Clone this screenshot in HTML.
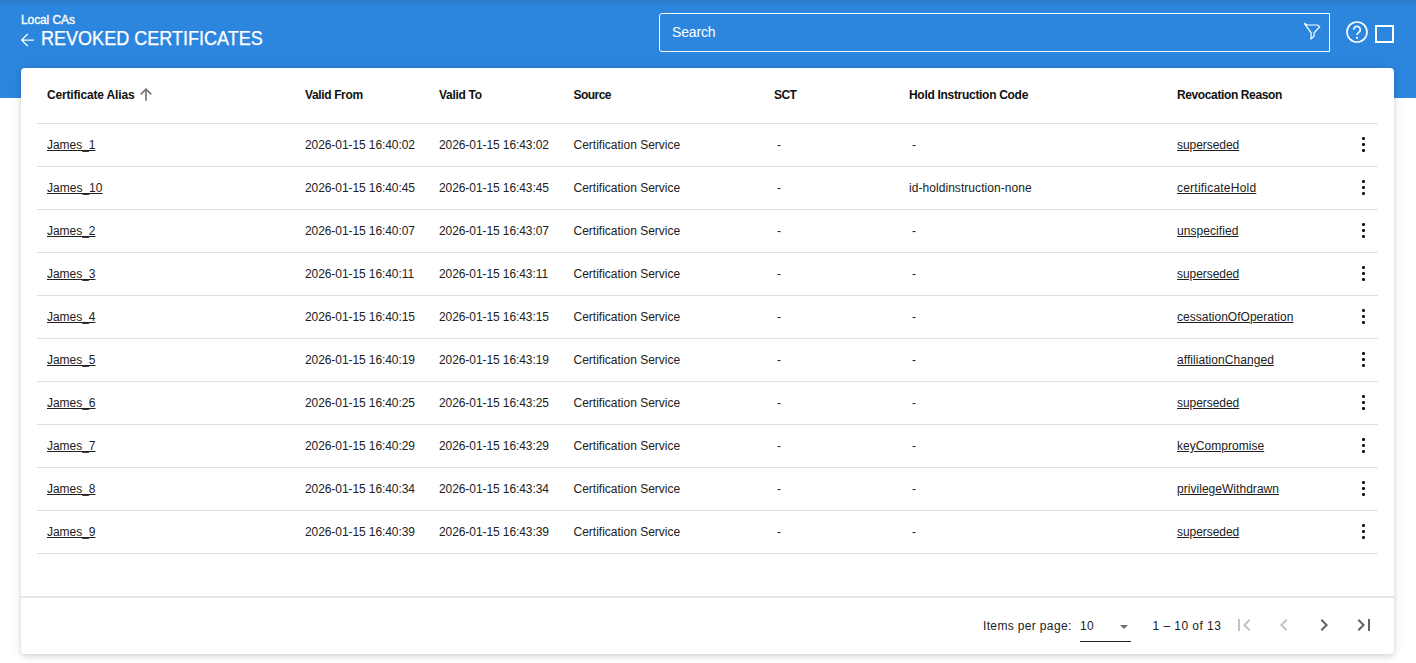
<!DOCTYPE html>
<html lang="en">
<head>
<meta charset="utf-8">
<title>Revoked Certificates</title>
<style>
*{box-sizing:border-box;margin:0;padding:0}
html,body{width:1416px;height:663px;overflow:hidden;background:#fff;font-family:"Liberation Sans",Arial,sans-serif;color:#212121}
.hdr{position:absolute;left:0;top:0;width:1416px;height:98px;background:linear-gradient(to bottom,#2a7aca 0,#2c81d6 3px,#2d86de 7px) #2d86de}
.crumb{position:absolute;left:21px;top:13px;font-size:12px;line-height:14px;color:#fff;-webkit-text-stroke:.35px #fff;letter-spacing:-.1px}
.back{position:absolute;left:20px;top:31.500px;width:16px;height:16px}
.title{position:absolute;left:41px;top:26px;font-size:19.5px;line-height:24px;color:#fff;white-space:nowrap;-webkit-text-stroke:.25px #fff;transform:scaleX(.925);transform-origin:0 0}
.search{position:absolute;left:659px;top:13px;width:671px;height:39px;border:1px solid #fff;border-radius:3px 0 0 3px}
.search span{position:absolute;left:12px;top:10px;font-size:14px;line-height:16px;color:#fff;letter-spacing:-.16px}
.filter{position:absolute;left:1300px;top:20px;width:24px;height:24px}
.help{position:absolute;left:1345.500px;top:21px;width:22px;height:22px}
.sq{position:absolute;left:1375px;top:25px;width:19px;height:18px;border:2px solid #fff}
.card{position:absolute;left:21px;top:68px;width:1373px;height:586px;background:#fff;border-radius:4px;box-shadow:0 2px 5px rgba(0,0,0,.12),0 1px 13px rgba(0,0,0,.09)}
.row{position:absolute;left:16px;width:1341px;height:43px;border-bottom:1px solid #e0e0e0}
.row.h{top:0;height:56px;font-weight:bold}
.c{position:absolute;top:0;height:42px;line-height:42px;font-size:12px;white-space:nowrap;color:#212121}
.h .c{height:55px;line-height:55px;color:#111}
.c a{color:#212121;text-decoration:underline}
.c1{left:10px}.c2{left:268px}.c3{left:402px}.c4{left:536.500px}.c5{left:740px}.c6{left:872px}.c6.d{left:875px}.c7{left:1140px}
.h .c5{left:737px}
.sort{position:absolute;left:102px;top:19px;width:14px;height:16px}
.dots{position:absolute;left:1324.800px;top:12.700px;width:4px;height:16px}
.dots i{position:absolute;left:0;width:3.400px;height:3.400px;border-radius:1.200px;background:#111}
.pg{position:absolute;left:0;top:528px;width:1373px;height:58px;border-top:2px solid #e4e4e4;font-size:12px;color:#212121}
.pg span{position:absolute;top:20px;line-height:16px;white-space:nowrap}
.pg .sel{position:absolute;left:1059px;top:43px;width:51px;height:1px;background:#212121}
.pg .tri{position:absolute;left:1098.600px;top:26.500px;width:0;height:0;border-left:4.400px solid transparent;border-right:4.400px solid transparent;border-top:4.400px solid #6e6e6e}
.pg svg{position:absolute;top:15px;width:24px;height:24px}
</style>
</head>
<body>
<div class="hdr">
  <div class="crumb">Local CAs</div>
  <svg class="back" viewBox="0 0 16 16"><path d="M14 8H1.800M7.700 2L1.700 8l6 6" fill="none" stroke="#fff" stroke-width="1.25"/></svg>
  <div class="title">REVOKED CERTIFICATES</div>
  <div class="search"><span>Search</span></div>
  <svg class="filter" viewBox="0 0 24 24"><path d="M4.300 3.400L7.200 5h10.200l2.300 1.800-5.600 6V16l-3 2.900v-6.100z" fill="none" stroke="#fff" stroke-width="1.200" stroke-linejoin="miter"/></svg>
  <svg class="help" viewBox="0 0 22 22"><circle cx="11" cy="11" r="10" fill="none" stroke="#fff" stroke-width="1.6"/><path d="M7.700 8.700a3.300 3.300 0 1 1 5.100 2.700c-1.100.800-1.800 1.300-1.800 2.700" fill="none" stroke="#fff" stroke-width="1.600"/><circle cx="11" cy="16.800" r="1.100" fill="#fff"/></svg>
  <div class="sq"></div>
</div>
<div class="card">
  <div class="row h">
    <div class="c c1" style="letter-spacing:-0.169px">Certificate Alias</div>
    <svg class="sort" viewBox="0 0 14 16"><path d="M7 13.700V2.200M1.800 7.400L7 2.200l5.200 5.200" fill="none" stroke="#757575" stroke-width="1.7"/></svg>
    <div class="c c2" style="letter-spacing:-0.366px">Valid From</div>
    <div class="c c3" style="letter-spacing:-0.291px">Valid To</div>
    <div class="c c4" style="letter-spacing:-0.531px">Source</div>
    <div class="c c5" style="letter-spacing:-0.6px">SCT</div>
    <div class="c c6" style="letter-spacing:-0.301px">Hold Instruction Code</div>
    <div class="c c7" style="letter-spacing:-0.381px">Revocation Reason</div>
  </div>
  <div class="row" style="top:56px">
    <div class="c c1" style="letter-spacing:-0.029px"><a>James_1</a></div>
    <div class="c c2" style="letter-spacing:-0.081px">2026-01-15 16:40:02</div>
    <div class="c c3" style="letter-spacing:-0.081px">2026-01-15 16:43:02</div>
    <div class="c c4">Certification Service</div>
    <div class="c c5">-</div>
    <div class="c c6 d">-</div>
    <div class="c c7" style="letter-spacing:-0.052px"><a>superseded</a></div>
    <div class="dots"><i style="top:0"></i><i style="top:6px"></i><i style="top:12px"></i></div>
  </div>
  <div class="row" style="top:99px">
    <div class="c c1" style="letter-spacing:0.016px"><a>James_10</a></div>
    <div class="c c2" style="letter-spacing:-0.081px">2026-01-15 16:40:45</div>
    <div class="c c3" style="letter-spacing:-0.081px">2026-01-15 16:43:45</div>
    <div class="c c4">Certification Service</div>
    <div class="c c5">-</div>
    <div class="c c6" style="letter-spacing:0.056px">id-holdinstruction-none</div>
    <div class="c c7" style="letter-spacing:0.218px"><a>certificateHold</a></div>
    <div class="dots"><i style="top:0"></i><i style="top:6px"></i><i style="top:12px"></i></div>
  </div>
  <div class="row" style="top:142px">
    <div class="c c1" style="letter-spacing:-0.029px"><a>James_2</a></div>
    <div class="c c2" style="letter-spacing:-0.081px">2026-01-15 16:40:07</div>
    <div class="c c3" style="letter-spacing:-0.081px">2026-01-15 16:43:07</div>
    <div class="c c4">Certification Service</div>
    <div class="c c5">-</div>
    <div class="c c6 d">-</div>
    <div class="c c7" style="letter-spacing:0.071px"><a>unspecified</a></div>
    <div class="dots"><i style="top:0"></i><i style="top:6px"></i><i style="top:12px"></i></div>
  </div>
  <div class="row" style="top:185px">
    <div class="c c1" style="letter-spacing:-0.029px"><a>James_3</a></div>
    <div class="c c2" style="letter-spacing:-0.081px">2026-01-15 16:40:11</div>
    <div class="c c3" style="letter-spacing:-0.081px">2026-01-15 16:43:11</div>
    <div class="c c4">Certification Service</div>
    <div class="c c5">-</div>
    <div class="c c6 d">-</div>
    <div class="c c7" style="letter-spacing:-0.052px"><a>superseded</a></div>
    <div class="dots"><i style="top:0"></i><i style="top:6px"></i><i style="top:12px"></i></div>
  </div>
  <div class="row" style="top:228px">
    <div class="c c1" style="letter-spacing:-0.029px"><a>James_4</a></div>
    <div class="c c2" style="letter-spacing:-0.081px">2026-01-15 16:40:15</div>
    <div class="c c3" style="letter-spacing:-0.081px">2026-01-15 16:43:15</div>
    <div class="c c4">Certification Service</div>
    <div class="c c5">-</div>
    <div class="c c6 d">-</div>
    <div class="c c7" style="letter-spacing:0.017px"><a>cessationOfOperation</a></div>
    <div class="dots"><i style="top:0"></i><i style="top:6px"></i><i style="top:12px"></i></div>
  </div>
  <div class="row" style="top:271px">
    <div class="c c1" style="letter-spacing:-0.029px"><a>James_5</a></div>
    <div class="c c2" style="letter-spacing:-0.081px">2026-01-15 16:40:19</div>
    <div class="c c3" style="letter-spacing:-0.081px">2026-01-15 16:43:19</div>
    <div class="c c4">Certification Service</div>
    <div class="c c5">-</div>
    <div class="c c6 d">-</div>
    <div class="c c7" style="letter-spacing:0.058px"><a>affiliationChanged</a></div>
    <div class="dots"><i style="top:0"></i><i style="top:6px"></i><i style="top:12px"></i></div>
  </div>
  <div class="row" style="top:314px">
    <div class="c c1" style="letter-spacing:-0.029px"><a>James_6</a></div>
    <div class="c c2" style="letter-spacing:-0.081px">2026-01-15 16:40:25</div>
    <div class="c c3" style="letter-spacing:-0.081px">2026-01-15 16:43:25</div>
    <div class="c c4">Certification Service</div>
    <div class="c c5">-</div>
    <div class="c c6 d">-</div>
    <div class="c c7" style="letter-spacing:-0.052px"><a>superseded</a></div>
    <div class="dots"><i style="top:0"></i><i style="top:6px"></i><i style="top:12px"></i></div>
  </div>
  <div class="row" style="top:357px">
    <div class="c c1" style="letter-spacing:-0.029px"><a>James_7</a></div>
    <div class="c c2" style="letter-spacing:-0.081px">2026-01-15 16:40:29</div>
    <div class="c c3" style="letter-spacing:-0.081px">2026-01-15 16:43:29</div>
    <div class="c c4">Certification Service</div>
    <div class="c c5">-</div>
    <div class="c c6 d">-</div>
    <div class="c c7" style="letter-spacing:0.038px"><a>keyCompromise</a></div>
    <div class="dots"><i style="top:0"></i><i style="top:6px"></i><i style="top:12px"></i></div>
  </div>
  <div class="row" style="top:400px">
    <div class="c c1" style="letter-spacing:-0.029px"><a>James_8</a></div>
    <div class="c c2" style="letter-spacing:-0.081px">2026-01-15 16:40:34</div>
    <div class="c c3" style="letter-spacing:-0.081px">2026-01-15 16:43:34</div>
    <div class="c c4">Certification Service</div>
    <div class="c c5">-</div>
    <div class="c c6 d">-</div>
    <div class="c c7" style="letter-spacing:0.035px"><a>privilegeWithdrawn</a></div>
    <div class="dots"><i style="top:0"></i><i style="top:6px"></i><i style="top:12px"></i></div>
  </div>
  <div class="row" style="top:443px">
    <div class="c c1" style="letter-spacing:-0.029px"><a>James_9</a></div>
    <div class="c c2" style="letter-spacing:-0.081px">2026-01-15 16:40:39</div>
    <div class="c c3" style="letter-spacing:-0.081px">2026-01-15 16:43:39</div>
    <div class="c c4">Certification Service</div>
    <div class="c c5">-</div>
    <div class="c c6 d">-</div>
    <div class="c c7" style="letter-spacing:-0.052px"><a>superseded</a></div>
    <div class="dots"><i style="top:0"></i><i style="top:6px"></i><i style="top:12px"></i></div>
  </div>
  <div class="pg">
    <span style="left:962px;letter-spacing:.35px">Items per page:</span>
    <span style="left:1059px;letter-spacing:.3px">10</span>
    <div class="tri"></div>
    <div class="sel"></div>
    <span style="left:1131.500px;letter-spacing:.45px">1 – 10 of 13</span>
    <svg style="left:1211px" viewBox="0 0 24 24"><path d="M18.410 16.590L13.820 12l4.590-4.590L17 6l-6 6 6 6zM6 6h2v12H6z" fill="#c2c2c2"/></svg>
    <svg style="left:1251px" viewBox="0 0 24 24"><path d="M15.410 7.410L14 6l-6 6 6 6 1.410-1.410L10.830 12z" fill="#c2c2c2"/></svg>
    <svg style="left:1291px" viewBox="0 0 24 24"><path d="M10 6L8.590 7.410 13.170 12l-4.580 4.590L10 18l6-6z" fill="#616161"/></svg>
    <svg style="left:1331px" viewBox="0 0 24 24"><path d="M5.590 7.410L10.180 12l-4.590 4.590L7 18l6-6-6-6zM16 6h2v12h-2z" fill="#616161"/></svg>
  </div>
</div>
</body>
</html>
